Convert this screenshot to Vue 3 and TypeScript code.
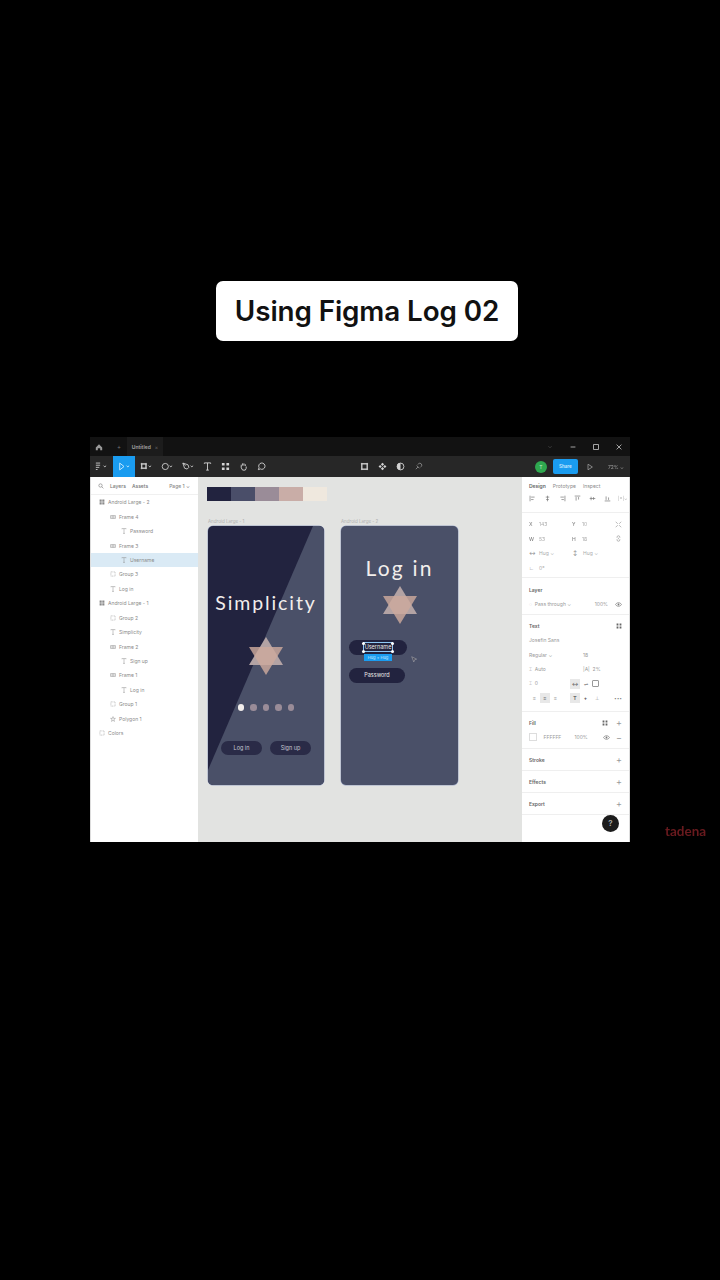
<template>
  <div class="page">
    <div class="chip">Using Figma Log 02</div>

    <div class="screen">
      <div class="titlebar">
        <svg class="home" viewBox="0 0 10 10"><path d="M1 5.500 5 1.500l4 4V9H6.500V6.500h-3V9H1z" /></svg>
        <span class="tab-plus">+</span>
        <div class="tab"><span>Untitled</span><i>×</i></div>
        <div class="win-btns">
          <svg viewBox="0 0 10 10"><path d="M3 4l2 2 2-2" /></svg>
          <svg viewBox="0 0 10 10"><path d="M2 5h6" /></svg>
          <svg viewBox="0 0 10 10"><rect x="2" y="2" width="6" height="6" /></svg>
          <svg viewBox="0 0 10 10"><path d="M2 2l6 6M8 2l-6 6" /></svg>
        </div>
      </div>

      <div class="toolbar">
        <div class="tools">
          <svg class="tool tool-menu" viewBox="0 0 14 10"><path d="M1 1h5M1 3.500h5M1 6h4M1 8.500h2M10 4l1.500 1.500L13 4" /></svg>
          <div class="tool-active">
            <svg viewBox="0 0 14 10"><path d="M2 1l5 4-5 4zM10 4l1.500 1.500L13 4" /></svg>
          </div>
          <svg class="tool" viewBox="0 0 14 10"><path d="M2 2h5v5H2zM.8 2h7.400M.8 7h7.400M2 .8v7.400M7 .8v7.400M10 4l1.500 1.500L13 4" /></svg>
          <svg class="tool" viewBox="0 0 14 10"><circle cx="5" cy="5" r="3.600" /><path d="M10 4l1.500 1.500L13 4" /></svg>
          <svg class="tool" viewBox="0 0 14 10"><path d="M1 1l6 2 1 3-2 2-3-1zM1 1l3 3M10 4l1.500 1.500L13 4" /></svg>
          <svg class="tool tool-sq" viewBox="0 0 10 10"><path d="M1.500 2V1h7v1M5 1v8M3.500 9h3" /></svg>
          <svg class="tool tool-sq" viewBox="0 0 10 10"><path class="solid" d="M1 1h3v3H1zM6 1h3v3H6zM1 6h3v3H1zM6 6h3v3H6z" /></svg>
          <svg class="tool tool-sq" viewBox="0 0 10 10"><path d="M2.500 5V3M4 4V1.500M5.500 4V1.500M7 4.500V2.500M2.500 5 2 4.500M2.500 5v1.500L4 9h3l1-2V5" /></svg>
          <svg class="tool tool-sq" viewBox="0 0 10 10"><path d="M1.500 8.500 2.300 6.300a3.500 3.500 0 1 1 1.400 1.400z" /></svg>
        </div>
        <div class="center-tools">
          <svg viewBox="0 0 10 10"><path d="M2 2h6v6H2zM1 2h8M1 8h8M2 1v8M8 1v8" /></svg>
          <svg viewBox="0 0 10 10"><path class="solid" d="M5 .8 6.800 2.600 5 4.400 3.200 2.600zM5 5.600 6.800 7.400 5 9.200 3.200 7.400zM2.400 3.200 4.200 5 2.400 6.800 .6 5zM7.600 3.200 9.400 5 7.600 6.800 5.800 5z" /></svg>
          <svg viewBox="0 0 10 10"><circle cx="5" cy="5" r="3.800" /><path class="solid" d="M5 1.200a3.800 3.800 0 0 0 0 7.600z" /></svg>
          <svg class="dim" viewBox="0 0 10 10"><path d="M2 8l2.500-2.500M4 3l1-1a2 2 0 0 1 3 3L7 6M3 4l3 3" /></svg>
        </div>
        <div class="right-tools">
          <span class="avatar">T</span>
          <span class="share">Share</span>
          <svg viewBox="0 0 10 10"><path d="M2.500 1.500 8 5 2.500 8.500z" /></svg>
          <span class="zoom-val">72% ⌄</span>
        </div>
      </div>

      <div class="workspace">
        <aside class="layers">
          <div class="layers-head">
            <svg viewBox="0 0 10 10"><circle cx="4.200" cy="4.200" r="2.800" /><path d="M6.300 6.300 9 9" /></svg>
            <span>Layers</span>
            <span>Assets</span>
            <span class="page-sel">Page 1 ⌄</span>
          </div>
          <div
            v-for="l in layerRows"
            :key="l.id"
            class="layer"
            :class="{ selected: l.selected }"
            :style="{ paddingLeft: 8 + l.depth * 11 + 'px' }"
          >
            <svg viewBox="0 0 10 10">
              <path v-if="l.kind === 'text'" d="M1.500 2V1h7v1M5 1v8M3.500 9h3" />
              <path v-else-if="l.kind === 'frame'" class="solid" d="M1 1h3.500v3.500H1zM5.500 1H9v3.500H5.500zM1 5.500h3.500V9H1zM5.500 5.500H9V9H5.500z" />
              <path v-else-if="l.kind === 'auto'" d="M1 2.500h8v5H1zM1 5h8M5 2.500v5" />
              <path v-else-if="l.kind === 'star'" d="M5 1l1 3h3L6.500 6l1 3L5 7.200 2.500 9l1-3L1 4h3z" />
              <rect v-else x="1.500" y="1.500" width="7" height="7" stroke-dasharray="1.500 1" />
            </svg>
            <span>{{ l.name }}</span>
          </div>
        </aside>

        <main class="canvas">
          <div class="swatches">
            <i v-for="c in swatches" :key="c" :style="{ background: c }"></i>
          </div>

          <span class="frame-label label-a">Android Large - 1</span>
          <span class="frame-label label-b">Android Large - 2</span>

          <section class="phone phone-a">
            <div class="diagonal"></div>
            <h2 class="simplicity">Simplicity</h2>
            <svg class="star" viewBox="0 0 34 38">
              <polygon points="17,0 34,28 0,28" fill="#b3a3a4" />
              <polygon points="17,38 34,10 0,10" fill="#cdaa9c" opacity=".82" />
            </svg>
            <div class="dots">
              <i class="on"></i><i></i><i></i><i></i><i></i>
            </div>
            <div class="cta">
              <span>Log in</span>
              <span>Sign up</span>
            </div>
          </section>

          <section class="phone phone-b">
            <h2 class="login">Log in</h2>
            <svg class="star" viewBox="0 0 34 38">
              <polygon points="17,0 34,28 0,28" fill="#b3a3a4" />
              <polygon points="17,38 34,10 0,10" fill="#cdaa9c" opacity=".82" />
            </svg>
            <div class="field field-user">
              <span class="sel-text">
                Username
                <i class="handle tl"></i><i class="handle tr"></i><i class="handle bl"></i><i class="handle br"></i>
              </span>
            </div>
            <span class="hug-tag">Hug × Hug</span>
            <div class="field field-pass">Password</div>
          </section>

          <svg class="cursor" viewBox="0 0 10 10"><path d="M1 1l7 3.500-3 1-1 3z" /></svg>
        </main>

        <aside class="props">
          <section class="p-sec p-tabs">
            <div class="tabs-row"><b>Design</b><span>Prototype</span><span>Inspect</span></div>
            <div class="align-row">
              <svg v-for="(d, i) in alignIcons" :key="i" viewBox="0 0 10 10"><path :d="d" /></svg>
              <span class="muted-mini">|×|⌄</span>
            </div>
          </section>
          <section class="p-sec p-geo">
            <div class="geo-row"><span><b>X</b>143</span><span><b>Y</b>10</span><svg viewBox="0 0 10 10"><path d="M1 1l3 3M9 1 6 4M1 9l3-3M9 9 6 6" /></svg></div>
            <div class="geo-row"><span><b>W</b>53</span><span><b>H</b>18</span><svg viewBox="0 0 10 10"><path d="M3 4V3a2 2 0 0 1 4 0v1M3 6v1a2 2 0 0 0 4 0V6M5 4v2" /></svg></div>
            <div class="geo-row"><span><b>↔</b>Hug ⌄</span><span><b>↕</b>Hug ⌄</span></div>
            <div class="geo-row"><span><b>∟</b>0°</span></div>
          </section>
          <section class="p-sec p-layer">
            <h4>Layer</h4>
            <div class="line"><span>◌ &nbsp;Pass through ⌄</span><span class="end">100%</span><svg class="eye" viewBox="0 0 10 10"><path d="M.8 5C2 3 3.500 2.500 5 2.500S8 3 9.200 5C8 7 6.500 7.500 5 7.500S2 7 .8 5z" /><circle class="solid" cx="5" cy="5" r="1.300" /></svg></div>
          </section>
          <section class="p-sec p-text">
            <h4 class="with-icon">Text<svg viewBox="0 0 10 10"><path class="solid" d="M1 1h3v3H1zM6 1h3v3H6zM1 6h3v3H1zM6 6h3v3H6z" /></svg></h4>
            <div class="line">Josefin Sans</div>
            <div class="line"><span class="col-a">Regular ⌄</span><span>18</span></div>
            <div class="line"><span class="col-a">⌶ &nbsp;Auto</span><span>|A| &nbsp;2%</span></div>
            <div class="line">
              <span class="col-b">⌶ &nbsp;0</span>
              <span class="pressed">↔</span>
              <span class="ico">⇌</span>
              <span class="box-ico"></span>
            </div>
            <div class="line line-align">
              <span class="ico">≡</span>
              <span class="pressed">≡</span>
              <span class="ico">≡</span>
              <span class="gap-s"></span>
              <span class="pressed">T</span>
              <span class="ico strong">+</span>
              <span class="ico">⊥</span>
              <span class="more">•••</span>
            </div>
          </section>
          <section class="p-sec p-fill">
            <h4 class="with-icon">Fill<span class="fill-icons"><svg viewBox="0 0 10 10"><path class="solid" d="M1 1h3v3H1zM6 1h3v3H6zM1 6h3v3H1zM6 6h3v3H6z" /></svg><em>+</em></span></h4>
            <div class="line">
              <i class="fill-swatch"></i>
              <span class="fill-hex">FFFFFF</span>
              <span class="fill-pct">100%</span>
              <svg class="eye" viewBox="0 0 10 10"><path d="M.8 5C2 3 3.500 2.500 5 2.500S8 3 9.200 5C8 7 6.500 7.500 5 7.500S2 7 .8 5z" /><circle class="solid" cx="5" cy="5" r="1.300" /></svg>
              <em class="minus">−</em>
            </div>
          </section>
          <section v-for="s in collapsed" :key="s" class="p-sec p-collapsed">
            <h4 class="with-icon">{{ s }}<em>+</em></h4>
          </section>
          <span class="help">?</span>
        </aside>
      </div>
    </div>

    <div class="watermark">tadena</div>
  </div>
</template>

<script setup lang="ts">
type LayerKind = "frame" | "auto" | "text" | "group" | "star"

interface LayerRow {
  id: number
  name: string
  depth: number
  kind: LayerKind
  selected?: boolean
}

const layerRows: LayerRow[] = [
  { id: 1, name: "Android Large - 2", depth: 0, kind: "frame" },
  { id: 2, name: "Frame 4", depth: 1, kind: "auto" },
  { id: 3, name: "Password", depth: 2, kind: "text" },
  { id: 4, name: "Frame 3", depth: 1, kind: "auto" },
  { id: 5, name: "Username", depth: 2, kind: "text", selected: true },
  { id: 6, name: "Group 3", depth: 1, kind: "group" },
  { id: 7, name: "Log in", depth: 1, kind: "text" },
  { id: 8, name: "Android Large - 1", depth: 0, kind: "frame" },
  { id: 9, name: "Group 2", depth: 1, kind: "group" },
  { id: 10, name: "Simplicity", depth: 1, kind: "text" },
  { id: 11, name: "Frame 2", depth: 1, kind: "auto" },
  { id: 12, name: "Sign up", depth: 2, kind: "text" },
  { id: 13, name: "Frame 1", depth: 1, kind: "auto" },
  { id: 14, name: "Log in", depth: 2, kind: "text" },
  { id: 15, name: "Group 1", depth: 1, kind: "group" },
  { id: 16, name: "Polygon 1", depth: 1, kind: "star" },
  { id: 17, name: "Colors", depth: 0, kind: "group" },
]

const swatches = ["#22233f", "#4a4e69", "#9a8c98", "#c9ada7", "#efe8de"]

const alignIcons = [
  "M1.500 1v8M3 3h5M3 6.500h3.500",
  "M5 1v8M2.500 3h5M3 6.500h4",
  "M8.500 1v8M2 3h5M3.500 6.500H7",
  "M1 1.500h8M3 3v5M6.500 3v3.500",
  "M1 5h8M3 2.500v5M6.500 3v4",
  "M1 8.500h8M3 2v5M6.500 3.500V7",
]

const collapsed = ["Stroke", "Effects", "Export"]
</script>

<style>
html,
body {
  margin: 0;
  background: #000;
}
</style>

<style scoped>
.page {
  position: relative;
  width: 720px;
  height: 1280px;
  overflow: hidden;
  background: #000;
  font-family: Inter, "Liberation Sans", sans-serif;
  display: flex;
  flex-direction: column;
  align-items: flex-start;
  padding-top: 281px;
  box-sizing: border-box;
}
.chip {
  margin-left: 216px;
  width: 302px;
  height: 60px;
  border-radius: 7px;
  background: #fff;
  color: #111;
  font-family: Inter, "Liberation Sans", sans-serif;
  font-size: 27.800px;
  font-weight: 600;
  line-height: 60px;
  letter-spacing: -0.100px;
  text-align: center;
  white-space: nowrap;
}
.screen {
  margin: 96px 0 0 90px;
  width: 540px;
  height: 405px;
  display: flex;
  flex-direction: column;
  filter: blur(0.7px);
  overflow: hidden;
}
svg {
  fill: none;
  stroke: currentColor;
  stroke-width: 1;
}
svg .solid {
  fill: currentColor;
  stroke: none;
}

.titlebar {
  height: 19px;
  flex: none;
  background: #121212;
  display: flex;
  align-items: center;
  color: #c8c8c8;
  padding-left: 5px;
}
.home {
  width: 8px;
  height: 8px;
  fill: #9a9a9a;
  stroke: none;
}
.tab-plus {
  margin-left: 14px;
  font-size: 6px;
  color: #777;
}
.tab {
  margin-left: 6px;
  width: 36px;
  height: 19px;
  background: #1c1c1c;
  display: flex;
  align-items: center;
  justify-content: center;
  gap: 4px;
  font-size: 5px;
  font-weight: 600;
  color: #a5a5a5;
}
.tab i {
  font-style: normal;
  color: #555;
}
.win-btns {
  margin-left: auto;
  display: flex;
  gap: 15px;
  padding-right: 7px;
}
.win-btns svg {
  width: 8px;
  height: 8px;
}
.win-btns svg:first-child {
  color: #444;
}

.toolbar {
  height: 21px;
  flex: none;
  background: #272727;
  display: flex;
  align-items: center;
  position: relative;
  color: #d4d4d4;
}
.tools {
  display: flex;
  align-items: center;
  height: 100%;
  padding-left: 5px;
}
.tool {
  width: 12px;
  height: 9px;
  margin-right: 9px;
  flex: none;
}
.tool-menu {
  margin-right: 6px;
}
.tool-sq {
  width: 9px;
  margin-right: 9px;
}
.tool-active {
  width: 22px;
  height: 100%;
  margin-right: 5px;
  background: #1a9cf0;
  display: flex;
  align-items: center;
  justify-content: center;
}
.tool-active svg {
  width: 12px;
  height: 9px;
  color: #d8f0ff;
}
.center-tools {
  position: absolute;
  left: 270px;
  display: flex;
  gap: 9px;
}
.center-tools svg {
  width: 9px;
  height: 9px;
}
.center-tools .dim {
  color: #8a8a8a;
}
.right-tools {
  margin-left: auto;
  display: flex;
  align-items: center;
  padding-right: 6px;
}
.avatar {
  width: 12px;
  height: 12px;
  border-radius: 50%;
  background: #2fa84f;
  color: #bdeec8;
  font-size: 5px;
  line-height: 12px;
  text-align: center;
}
.share {
  margin-left: 6px;
  width: 25px;
  height: 15px;
  border-radius: 2px;
  background: #1a9cf0;
  color: #cfeaff;
  font-size: 4.500px;
  font-weight: 600;
  line-height: 15px;
  text-align: center;
}
.right-tools svg {
  margin-left: 8px;
  width: 8px;
  height: 8px;
  color: #9a9a9a;
}
.zoom-val {
  margin-left: 14px;
  font-size: 5px;
  color: #a0a0a0;
}

.workspace {
  flex: 1;
  display: flex;
  min-height: 0;
}
.layers {
  width: 108px;
  flex: none;
  background: #fff;
  border-left: 1px solid #ddd;
  box-sizing: border-box;
  color: #8a8a8a;
  font-size: 5px;
}
.layers-head {
  height: 18px;
  display: flex;
  align-items: center;
  gap: 6px;
  padding-left: 7px;
  color: #777;
  font-weight: 500;
  border-bottom: 1px solid #f0f0f0;
  box-sizing: border-box;
}
.layers-head svg {
  width: 6px;
  height: 6px;
}
.page-sel {
  margin-left: 15px;
  color: #888;
}
.layer {
  height: 14.450px;
  display: flex;
  align-items: center;
  gap: 3px;
  white-space: nowrap;
}
.layer svg {
  width: 6px;
  height: 6px;
  flex: none;
  color: #8a8a8a;
  stroke-width: 0.8;
}
.layer.selected {
  background: #daeaf5;
}

.canvas {
  flex: 1;
  position: relative;
  background: #e2e3e1;
}
.swatches {
  position: absolute;
  left: 9px;
  top: 10px;
  display: flex;
}
.swatches i {
  width: 24px;
  height: 14px;
}
.frame-label {
  position: absolute;
  top: 42px;
  font-size: 4.500px;
  color: #b0b0b0;
}
.label-a {
  left: 10px;
}
.label-b {
  left: 143px;
}
.phone {
  position: absolute;
  top: 49px;
  width: 116px;
  height: 259px;
  border-radius: 5px;
  background: #4a5068;
  overflow: hidden;
  display: flex;
  flex-direction: column;
  align-items: center;
  box-shadow: 0 0 0 0.5px #9aa5c4;
}
.phone-a {
  left: 10px;
  background: #22233f;
}
.phone-b {
  left: 143px;
  width: 117px;
}
.diagonal {
  position: absolute;
  inset: 0;
  background: #4a5068;
  clip-path: polygon(105px 0, 116px 0, 116px 259px, 0 259px, 0 244px);
}
.simplicity,
.login {
  position: relative;
  margin: 0;
  font-family: Lato, "Open Sans", sans-serif;
  font-weight: 400;
  color: #f2eeec;
  white-space: nowrap;
}
.simplicity {
  margin-top: 65px;
  font-size: 19.500px;
  line-height: 24px;
  letter-spacing: 1.900px;
}
.login {
  margin-top: 29px;
  font-size: 21px;
  line-height: 26px;
  letter-spacing: 2.200px;
}
.star {
  position: relative;
  width: 34px;
  height: 38px;
  flex: none;
  stroke: none;
}
.phone-a .star {
  margin-top: 22px;
}
.phone-b .star {
  margin-top: 5px;
}
.dots {
  position: relative;
  margin-top: 29px;
  display: flex;
  gap: 6px;
}
.dots i {
  width: 6.500px;
  height: 6.500px;
  border-radius: 50%;
  background: #9a8c98;
}
.dots i.on {
  background: #f2eeec;
}
.cta {
  position: relative;
  margin-top: 30px;
  display: flex;
  gap: 8px;
}
.cta span {
  width: 41px;
  height: 14px;
  border-radius: 7px;
  background: #2a2b47;
  color: #c9c9d4;
  font-size: 5.500px;
  line-height: 14px;
  text-align: center;
}
.field {
  background: #22233f;
  border-radius: 8px;
  height: 15px;
  color: #ece9e6;
  font-size: 5.500px;
  line-height: 15px;
  text-align: center;
  align-self: flex-start;
  margin-left: 8px;
}
.field-user {
  margin-top: 16px;
  width: 58px;
}
.field-pass {
  margin-top: 7px;
  width: 56px;
}
.sel-text {
  position: relative;
  display: inline-block;
  padding: 0 1px;
  line-height: 8px;
  outline: 0.5px solid #8fc8f5;
}
.handle {
  position: absolute;
  width: 3px;
  height: 3px;
  border-radius: 50%;
  background: #fff;
}
.tl {
  left: -1.500px;
  top: -1.500px;
}
.tr {
  right: -1.500px;
  top: -1.500px;
}
.bl {
  left: -1.500px;
  bottom: -1.500px;
}
.br {
  right: -1.500px;
  bottom: -1.500px;
}
.hug-tag {
  align-self: flex-start;
  margin: -1px 0 0 23px;
  width: 28px;
  height: 7px;
  background: #1a9cf0;
  color: #cfeaff;
  font-size: 4px;
  line-height: 7px;
  white-space: nowrap;
  text-align: center;
  position: relative;
}
.cursor {
  position: absolute;
  left: 213px;
  top: 179px;
  width: 7px;
  height: 7px;
  fill: #4a4a5a;
  stroke: #c8c8c8;
  stroke-width: 0.6;
}

.props {
  width: 108px;
  flex: none;
  position: relative;
  background: #fff;
  color: #8a8a8a;
  font-size: 5px;
  border-right: 1px solid #ddd;
  box-sizing: border-box;
}
.p-sec {
  border-bottom: 1px solid #efefef;
  padding: 0 7px;
}
.p-tabs {
  height: 36px;
  box-sizing: border-box;
}
.tabs-row {
  height: 18px;
  display: flex;
  align-items: center;
  gap: 7px;
}
.tabs-row b {
  color: #666;
  font-weight: 600;
}
.align-row {
  display: flex;
  align-items: center;
  gap: 8px;
  color: #777;
}
.align-row svg {
  width: 7px;
  height: 7px;
  flex: none;
}
.muted-mini {
  font-size: 4.500px;
  color: #aaa;
  white-space: nowrap;
  margin-left: -1px;
}
.p-geo {
  height: 65px;
  box-sizing: border-box;
  padding-top: 4px;
}
.geo-row {
  height: 14.600px;
  display: flex;
  align-items: center;
  color: #aaa;
}
.geo-row span {
  width: 44px;
  white-space: nowrap;
}
.geo-row b {
  display: inline-block;
  width: 10px;
  color: #888;
  font-weight: 500;
}
.geo-row svg {
  width: 7px;
  height: 7px;
  margin-left: auto;
  color: #999;
}
h4 {
  margin: 0;
  height: 15px;
  display: flex;
  align-items: center;
  font-size: 5px;
  font-weight: 600;
  color: #666;
}
.with-icon {
  justify-content: space-between;
}
.with-icon svg {
  width: 6px;
  height: 6px;
}
.with-icon em,
.minus {
  font-style: normal;
  font-size: 9px;
  font-weight: 400;
  color: #999;
}
.p-layer {
  height: 37px;
  box-sizing: border-box;
  padding-top: 4px;
}
.line {
  height: 14.500px;
  display: flex;
  align-items: center;
  white-space: nowrap;
  color: #999;
}
.end {
  margin-left: auto;
}
.eye {
  width: 7px;
  height: 7px;
  margin-left: 7px;
  color: #777;
  flex: none;
}
.p-text {
  height: 97px;
  box-sizing: border-box;
  padding-top: 3px;
}
.col-a {
  width: 54px;
}
.col-b {
  width: 41px;
}
.pressed {
  width: 10px;
  height: 10px;
  line-height: 10px;
  text-align: center;
  background: #e8e8e8;
  color: #666;
  font-weight: 700;
}
.ico {
  width: 11px;
  text-align: center;
  color: #999;
}
.ico.strong {
  color: #555;
  font-weight: 700;
}
.box-ico {
  margin-left: 1px;
  width: 5px;
  height: 5px;
  border: 1px solid #999;
  border-radius: 1px;
}
.gap-s {
  width: 9px;
}
.more {
  margin-left: auto;
  color: #777;
  font-size: 4px;
  letter-spacing: 0.300px;
}
.p-fill {
  height: 37px;
  box-sizing: border-box;
  padding-top: 3px;
}
.fill-icons {
  display: flex;
  align-items: center;
  gap: 8px;
}
.fill-swatch {
  width: 6px;
  height: 6px;
  border: 0.5px solid #ddd;
}
.fill-hex {
  margin-left: 7px;
  width: 33px;
}
.fill-pct {
  width: 23px;
}
.minus {
  margin-left: 6px;
}
.p-collapsed {
  height: 22px;
  box-sizing: border-box;
  padding-top: 3px;
}
.help {
  position: absolute;
  left: 80px;
  top: 338px;
  width: 17px;
  height: 17px;
  border-radius: 50%;
  background: #1c1c1c;
  color: #aaa;
  font-size: 8px;
  font-weight: 600;
  line-height: 17px;
  text-align: center;
}
.watermark {
  position: absolute;
  left: 665px;
  top: 823px;
  color: #6a1a1e;
  font-family: Lato, sans-serif;
  font-size: 13.500px;
  font-weight: 700;
  filter: blur(0.5px);
}
</style>
